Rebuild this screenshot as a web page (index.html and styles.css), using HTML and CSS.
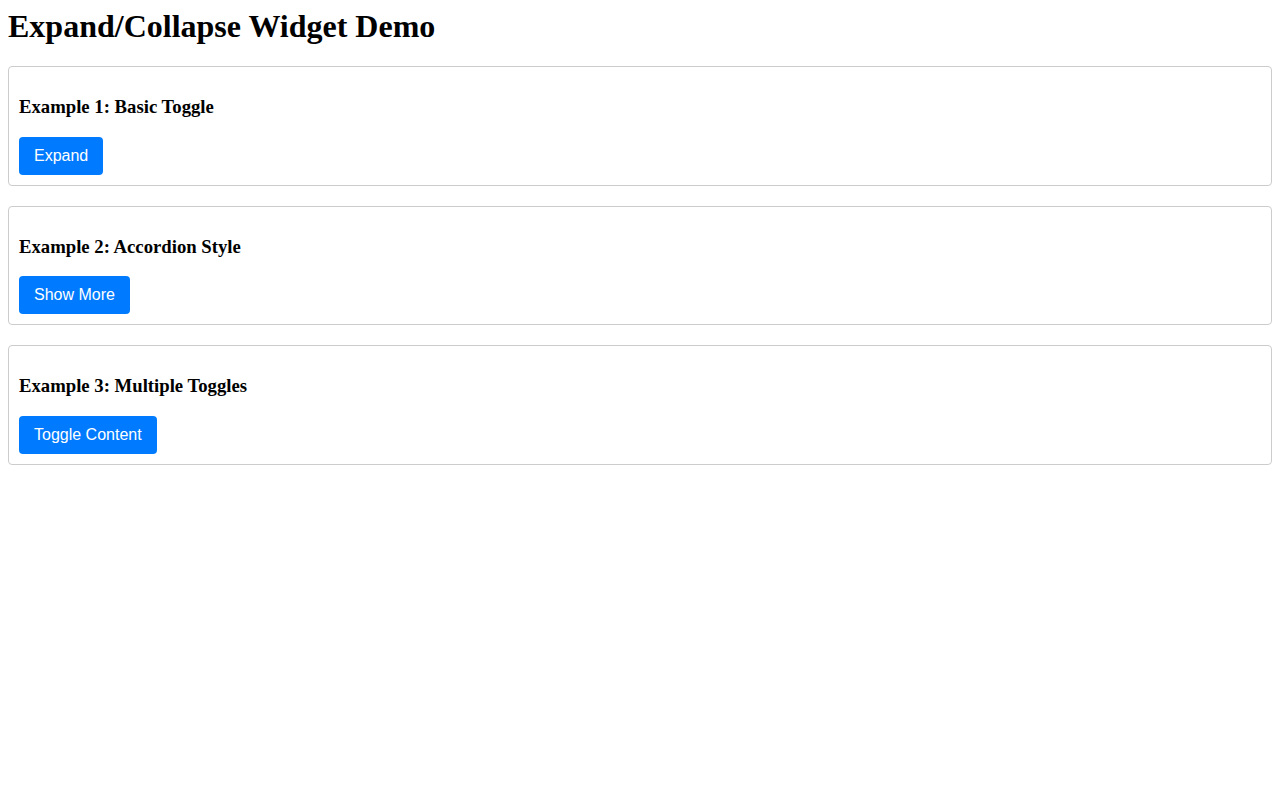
FILE: index.html
```html
<!DOCTYPE html>
<html lang="en">
<head>
<meta charset="utf-8">
<title>Expand/Collapse Widget Demo</title>
<link rel="stylesheet" href="styles.css">
</head>
<body>
<h1 class="title">Expand/Collapse Widget Demo</h1>
<div class="example">
  <h3 class="example-title">Example 1: Basic Toggle</h3>
  <button class="toggle-btn">Expand</button>
</div>
<div class="example">
  <h3 class="example-title">Example 2: Accordion Style</h3>
  <button class="toggle-btn">Show More</button>
</div>
<div class="example">
  <h3 class="example-title">Example 3: Multiple Toggles</h3>
  <button class="toggle-btn">Toggle Content</button>
</div>
</body>
</html>
```
FILE: styles.css
```css
body {
  margin: 8px;
  font-family: "Liberation Serif", "Times New Roman", serif;
  color: #000;
  background: #fff;
}
.title {
  font-size: 32px;
  font-weight: bold;
  margin: 0 0 21.44px;
}
.example {
  border: 1px solid #ccc;
  border-radius: 4px;
  padding: 10px;
  margin-bottom: 20px;
}
.example-title {
  font-size: 18.72px;
  font-weight: bold;
  margin: 18.72px 0;
}
.toggle-btn {
  display: block;
  font-family: "Liberation Sans", Arial, sans-serif;
  font-size: 16px;
  background: #007bff;
  color: #fff;
  border: none;
  border-radius: 4px;
  padding: 10px 15px;
  cursor: pointer;
}
```
